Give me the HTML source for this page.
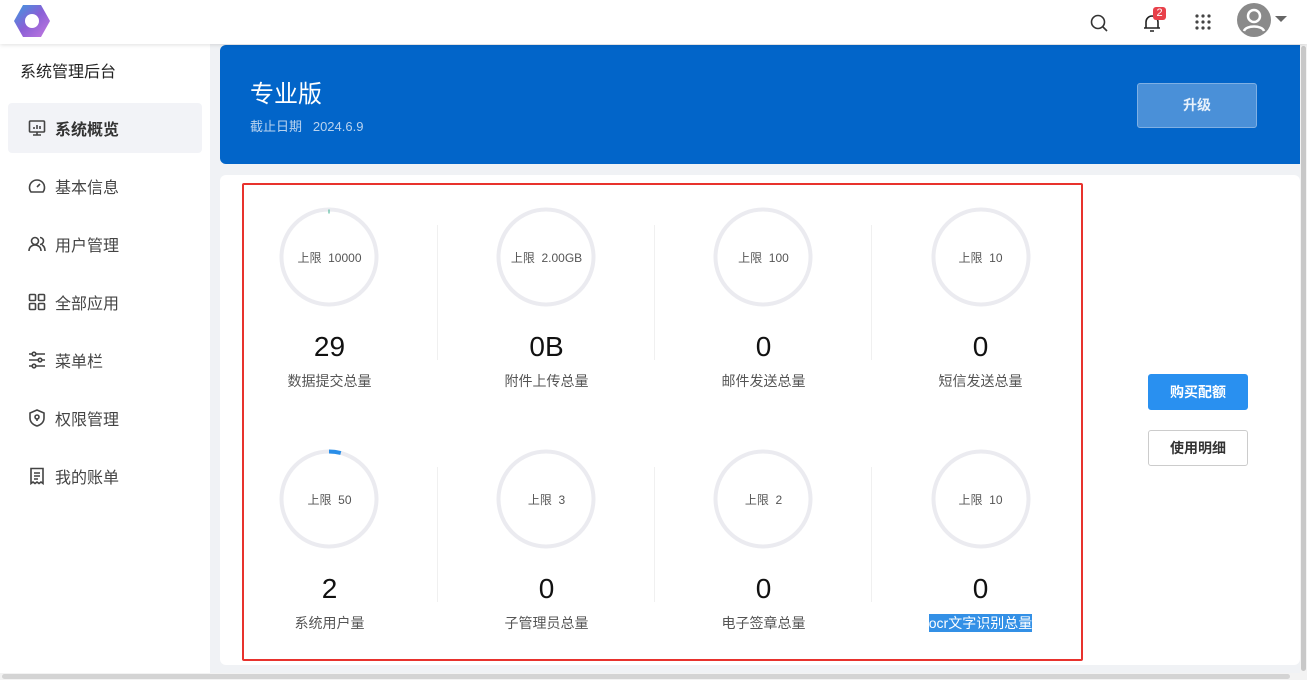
<!DOCTYPE html>
<html><head><meta charset="utf-8"><style>
*{margin:0;padding:0;box-sizing:border-box}
body{width:1307px;height:680px;overflow:hidden;background:#f0f2f5;font-family:"Liberation Sans","Noto Sans CJK SC",sans-serif;position:relative;color:#333}
.hdr{position:absolute;left:0;top:0;width:1307px;height:44px;background:#fff;box-shadow:0 1px 4px rgba(0,0,0,.12);z-index:2}
.side{position:absolute;left:0;top:44px;width:210px;height:636px;background:#fff}
.side .t{position:absolute;left:20px;top:14px;font-size:16px;color:#222}
.item{position:absolute;left:8px;width:194px;height:50px;border-radius:4px;font-size:16px;color:#444;display:flex;align-items:center;padding-left:20px}
.item svg{margin-right:9px}
.item.act{background:#f2f3f7;font-weight:bold;color:#333}
.banner{position:absolute;left:220px;top:45px;width:1080px;height:119px;background:#0265c9;border-radius:6px 0 0 6px}
.banner h1{position:absolute;left:30px;top:29px;font-size:24px;color:#fff;font-weight:normal}
.banner p{position:absolute;left:30px;top:71px;font-size:13px;color:#b9d3ef}
.up{position:absolute;left:917px;top:38px;width:120px;height:45px;background:#4a90d8;border:1px solid #7fb0e4;border-radius:3px;color:#e8f1fb;font-size:14px;font-weight:bold;text-align:center;line-height:43px}
.card{position:absolute;left:220px;top:175px;width:1080px;height:490px;background:#fff;border-radius:6px}
.red{position:absolute;left:242px;top:183px;width:841px;height:478px;border:2px solid #e8322d;border-radius:2px}
.cell{position:absolute;width:217px;text-align:center}
.ring{position:absolute;left:0;top:0}
.lim{position:absolute;width:100%;font-size:12px;color:#555}
.num{position:absolute;width:100%;font-size:28px;color:#111}
.lab{position:absolute;width:100%;font-size:14px;color:#555}
.div{position:absolute;width:1px;background:#f0f0f0}
.btn{position:absolute;left:1148px;width:100px;height:36px;border-radius:3px;font-size:14px;font-weight:bold;text-align:center;line-height:34px}
.sb{position:absolute;background:#dcdcdc}
</style></head><body>
<div class="hdr">
<svg style="position:absolute;left:13px;top:3px" width="38" height="36" viewBox="0 0 38 36"><defs><linearGradient id="g" x1="0" y1="0" x2="1" y2="1"><stop offset="0" stop-color="#3a9be0"/><stop offset=".5" stop-color="#8a5fd6"/><stop offset="1" stop-color="#c57ae0"/></linearGradient></defs><path d="M10 2 L28 2 L37 18 L28 34 L10 34 L1 18Z" fill="url(#g)"/><circle cx="19" cy="18" r="7" fill="#fff"/></svg>
<svg style="position:absolute;left:1090px;top:14px" width="18" height="18" viewBox="0 0 18 18" fill="none" stroke="#333" stroke-width="1.6"><circle cx="8" cy="8" r="6.5"/><path d="M13 13l4 4"/></svg>
<svg style="position:absolute;left:1143px;top:13px" width="18" height="20" viewBox="0 0 18 20" fill="none" stroke="#222" stroke-width="1.6"><path d="M3 15V9a6 6 0 0112 0v6M1 15h16M7 18h4"/></svg>
<div style="position:absolute;left:1153px;top:7px;width:13px;height:13px;background:#e8404a;border-radius:3px;color:#fff;font-size:11px;text-align:center;line-height:13px">2</div>
<svg style="position:absolute;left:1195px;top:14px" width="16" height="16"><g fill="#444"><circle cx="2" cy="2" r="1.6"/><circle cx="8" cy="2" r="1.6"/><circle cx="14" cy="2" r="1.6"/><circle cx="2" cy="8" r="1.6"/><circle cx="8" cy="8" r="1.6"/><circle cx="14" cy="8" r="1.6"/><circle cx="2" cy="14" r="1.6"/><circle cx="8" cy="14" r="1.6"/><circle cx="14" cy="14" r="1.6"/></g></svg>
<svg style="position:absolute;left:1237px;top:3px" width="52" height="34" viewBox="0 0 52 34"><circle cx="17" cy="17" r="17" fill="#8a8a8a"/><circle cx="17" cy="13" r="6" fill="none" stroke="#fff" stroke-width="2.5"/><path d="M7 28c2-6 18-6 20 0" fill="none" stroke="#fff" stroke-width="2.5"/><path d="M38 13h12l-6 6z" fill="#666"/></svg>
</div>
<div class="side"><div class="t">系统管理后台</div>
<div class="item act" style="top:59px"><svg width="18" height="18" viewBox="0 0 18 18" fill="none" stroke="#444" stroke-width="1.6"><rect x="1.5" y="2" width="15" height="11" rx="1"/><path d="M5 16h8M9 13v3M6 10V8M9 10V6M12 10V7"/></svg>系统概览</div>
<div class="item" style="top:117px"><svg width="18" height="18" viewBox="0 0 18 18" fill="none" stroke="#444" stroke-width="1.6"><path d="M3 15a7.5 7.5 0 1112 0z"/><path d="M9 10l3-3"/></svg>基本信息</div>
<div class="item" style="top:175px"><svg width="18" height="18" viewBox="0 0 18 18" fill="none" stroke="#444" stroke-width="1.6"><circle cx="7" cy="6" r="3.5"/><path d="M1 16c0-4 3-6 6-6s6 2 6 6M12 2.5a3.5 3.5 0 010 7M14 10c2 1 3 3 3 6"/></svg>用户管理</div>
<div class="item" style="top:233px"><svg width="18" height="18" viewBox="0 0 18 18" fill="none" stroke="#444" stroke-width="1.6"><rect x="1.5" y="1.5" width="6" height="6" rx="1"/><rect x="10.5" y="1.5" width="6" height="6" rx="1"/><rect x="1.5" y="10.5" width="6" height="6" rx="1"/><rect x="10.5" y="10.5" width="6" height="6" rx="1"/></svg>全部应用</div>
<div class="item" style="top:291px"><svg width="18" height="18" viewBox="0 0 18 18" fill="none" stroke="#444" stroke-width="1.6"><path d="M1 3h3M8 3h9M1 9h9M14 9h3M1 15h3M8 15h9"/><circle cx="6" cy="3" r="1.8"/><circle cx="12" cy="9" r="1.8"/><circle cx="6" cy="15" r="1.8"/></svg>菜单栏</div>
<div class="item" style="top:349px"><svg width="18" height="18" viewBox="0 0 18 18" fill="none" stroke="#444" stroke-width="1.6"><path d="M9 1l7 3v5c0 4-3 7-7 8-4-1-7-4-7-8V4z"/><circle cx="9" cy="8" r="2"/><path d="M9 10v2"/></svg>权限管理</div>
<div class="item" style="top:407px"><svg width="18" height="18" viewBox="0 0 18 18" fill="none" stroke="#444" stroke-width="1.6"><path d="M3 1.5h12v15l-2-1.5-2 1.5-2-1.5-2 1.5-2-1.5-2 1.5z"/><path d="M6 6h6M6 9h6M6 12h4"/></svg>我的账单</div>
</div>
<div class="banner"><h1>专业版</h1><p>截止日期&nbsp;&nbsp;&nbsp;2024.6.9</p><div class="up">升级</div></div>
<div class="card"></div>
<div class="red"></div>
<div class="div" style="left:437px;top:225px;height:135px"></div>
<div class="div" style="left:654px;top:225px;height:135px"></div>
<div class="div" style="left:871px;top:225px;height:135px"></div>
<div class="div" style="left:437px;top:467px;height:135px"></div>
<div class="div" style="left:654px;top:467px;height:135px"></div>
<div class="div" style="left:871px;top:467px;height:135px"></div>

<div class="cell" style="left:221px;top:0"><svg class="ring" style="left:58px;top:207px" width="100" height="100"><circle cx="50" cy="50" r="47.5" fill="none" stroke="#ebebf0" stroke-width="4"/><path d="M50 2.5v4" stroke="#3bb08f" stroke-width="1"/></svg><div class="lim" style="top:249px">上限&nbsp;&nbsp;10000</div><div class="num" style="top:331px">29</div><div class="lab" style="top:371px">数据提交总量</div></div>
<div class="cell" style="left:438px;top:0"><svg class="ring" style="left:58px;top:207px" width="100" height="100"><circle cx="50" cy="50" r="47.5" fill="none" stroke="#ebebf0" stroke-width="4"/></svg><div class="lim" style="top:249px">上限&nbsp;&nbsp;2.00GB</div><div class="num" style="top:331px">0B</div><div class="lab" style="top:371px">附件上传总量</div></div>
<div class="cell" style="left:655px;top:0"><svg class="ring" style="left:58px;top:207px" width="100" height="100"><circle cx="50" cy="50" r="47.5" fill="none" stroke="#ebebf0" stroke-width="4"/></svg><div class="lim" style="top:249px">上限&nbsp;&nbsp;100</div><div class="num" style="top:331px">0</div><div class="lab" style="top:371px">邮件发送总量</div></div>
<div class="cell" style="left:872px;top:0"><svg class="ring" style="left:59px;top:207px" width="100" height="100"><circle cx="50" cy="50" r="47.5" fill="none" stroke="#ebebf0" stroke-width="4"/></svg><div class="lim" style="top:249px">上限&nbsp;&nbsp;10</div><div class="num" style="top:331px">0</div><div class="lab" style="top:371px">短信发送总量</div></div>
<div class="cell" style="left:221px;top:0"><svg class="ring" style="left:58px;top:449px" width="100" height="100"><circle cx="50" cy="50" r="47.5" fill="none" stroke="#ebebf0" stroke-width="4"/><path d="M50 2.5A47.5 47.5 0 0 1 61.8 4" fill="none" stroke="#2a8ee8" stroke-width="4"/></svg><div class="lim" style="top:491px">上限&nbsp;&nbsp;50</div><div class="num" style="top:573px">2</div><div class="lab" style="top:613px">系统用户量</div></div>
<div class="cell" style="left:438px;top:0"><svg class="ring" style="left:58px;top:449px" width="100" height="100"><circle cx="50" cy="50" r="47.5" fill="none" stroke="#ebebf0" stroke-width="4"/></svg><div class="lim" style="top:491px">上限&nbsp;&nbsp;3</div><div class="num" style="top:573px">0</div><div class="lab" style="top:613px">子管理员总量</div></div>
<div class="cell" style="left:655px;top:0"><svg class="ring" style="left:58px;top:449px" width="100" height="100"><circle cx="50" cy="50" r="47.5" fill="none" stroke="#ebebf0" stroke-width="4"/></svg><div class="lim" style="top:491px">上限&nbsp;&nbsp;2</div><div class="num" style="top:573px">0</div><div class="lab" style="top:613px">电子签章总量</div></div>
<div class="cell" style="left:872px;top:0"><svg class="ring" style="left:59px;top:449px" width="100" height="100"><circle cx="50" cy="50" r="47.5" fill="none" stroke="#ebebf0" stroke-width="4"/></svg><div class="lim" style="top:491px">上限&nbsp;&nbsp;10</div><div class="num" style="top:573px">0</div><div class="lab" style="top:613px"><span style="background:#3390e6;color:#fff;padding:1px 0">ocr文字识别总量</span></div></div>

<div class="btn" style="top:374px;background:#2990f0;color:#fff;border:1px solid #2990f0">购买配额</div>
<div class="btn" style="top:430px;background:#fff;color:#333;border:1px solid #ccc">使用明细</div>
<div class="sb" style="left:1300px;top:44px;width:7px;height:636px;background:#f3f3f3"></div>
<div class="sb" style="left:1301px;top:46px;width:5px;height:625px;border-radius:3px;background:#c8c8c8"></div>
<div class="sb" style="left:0;top:673px;width:1300px;height:7px;background:#f3f3f3"></div>
<div class="sb" style="left:2px;top:674px;width:1288px;height:5px;border-radius:3px;background:#d4d4d4"></div>
</body></html>
